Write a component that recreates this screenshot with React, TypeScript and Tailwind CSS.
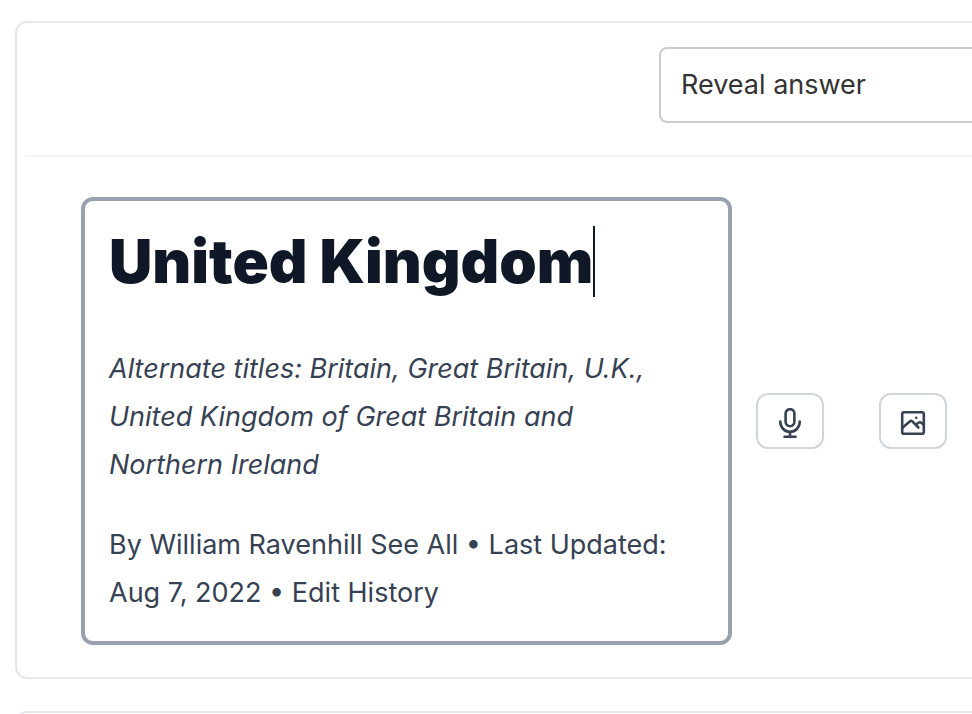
import { useState } from "react";

function MicIcon() {
  return (
    <svg viewBox="0 0 32 32" className="mt-1.5 h-8 w-8" fill="none" stroke="currentColor" strokeWidth="2.6" strokeLinecap="round" strokeLinejoin="round" aria-hidden="true">
      <rect x="11.6" y="1.2" width="8.8" height="17" rx="4.4" />
      <path d="M6.3 13.5v.6a9.7 9.7 0 0 0 19.4 0v-.6M16 24v5M10.5 28.8h11" />
    </svg>
  );
}

function ImageIcon() {
  return (
    <svg viewBox="0 0 32 32" className="mt-1.5 h-8 w-8" fill="none" stroke="currentColor" strokeWidth="2.6" strokeLinecap="round" strokeLinejoin="round" aria-hidden="true">
      <rect x="5.2" y="4.2" width="21.6" height="21.6" rx="1.8" />
      <path d="M5.2 20l7.8-6.8a1.6 1.6 0 0 1 2.1 0l6.3 6.3M18.6 16.8l3-2.1a2.2 2.2 0 0 1 2.6 0l2.6 2.1" />
      <circle cx="19.2" cy="9.8" r="1.3" fill="currentColor" stroke="none" />
    </svg>
  );
}

export default function App() {
  const [answerMode, setAnswerMode] = useState("Reveal answer");

  return (
    <main className="h-screen overflow-hidden bg-white pt-[21px] pl-[15px] font-[Inter,sans-serif] text-gray-700">
      <section className="-mr-3 rounded-xl border-2 border-gray-200 pb-8 pl-2">
        <header className="flex justify-end border-b-2 border-gray-100 pt-6 pb-8">
          <select
            aria-label="Question type"
            value={answerMode}
            onChange={(e) => setAnswerMode(e.target.value)}
            className="-mr-3 h-[76px] w-[335px] appearance-none rounded-lg border-2 border-[#cccccc] bg-white px-5 text-[27px] text-[#333333]"
          >
            <option>Reveal answer</option>
          </select>
        </header>

        <div className="flex items-center gap-6 pt-10 pl-14">
          <article className="w-[651px] rounded-xl border-4 border-gray-400 px-6 py-6">
            <h1 className="flex items-center text-[60px] leading-[72px] font-black text-gray-900">
              United Kingdom
              <span className="h-[71px] w-[2px] bg-gray-900" />
            </h1>
            <p className="mt-12 pr-4 text-[27px] leading-[48px] italic">
              Alternate titles: Britain, Great Britain, U.K., United Kingdom of Great Britain and Northern Ireland
            </p>
            <p className="mt-8 pr-4 text-[27px] leading-[48px]">
              By William Ravenhill See All • Last Updated: Aug 7, 2022 • Edit History
            </p>
          </article>
          <div className="flex shrink-0 gap-[55px]">
            <button type="button" aria-label="Record audio" className="grid h-14 w-[68px] place-items-center rounded-xl border-2 border-gray-300">
              <MicIcon />
            </button>
            <button type="button" aria-label="Add image" className="grid h-14 w-[68px] place-items-center rounded-xl border-2 border-gray-300">
              <ImageIcon />
            </button>
          </div>
        </div>
      </section>
      <section className="mt-8 -mr-3 rounded-xl border-2 border-gray-200 pb-8" />
    </main>
  );
}
